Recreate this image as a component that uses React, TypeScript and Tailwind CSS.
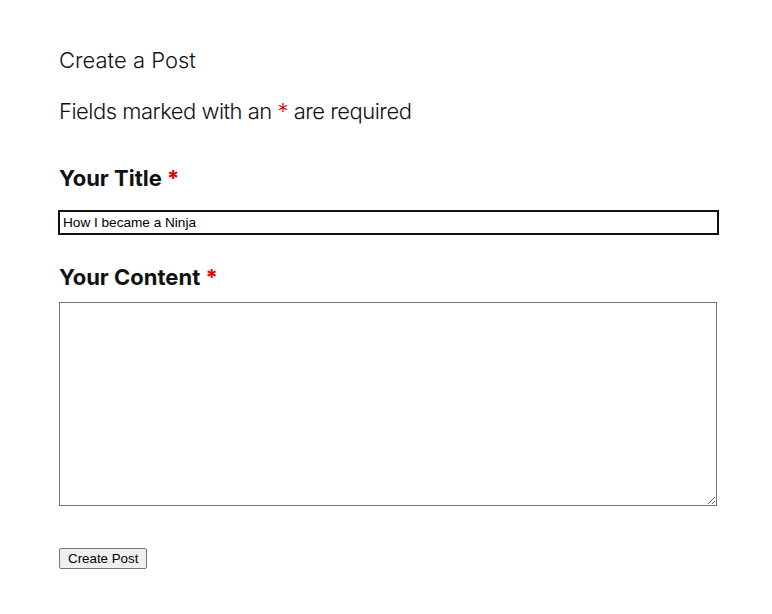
export default function App() {
  return (
    <div className="min-h-screen bg-white pl-[59px] pr-[55px] pt-[45px] text-[#111] font-['Inter',sans-serif]">
      <h1 className="text-[22px] font-light leading-[30px]">Create a Post</h1>
      <p className="mt-[21px] text-[22px] font-light leading-[30px] tracking-[-0.5px]">
        Fields marked with an <span className="text-[#e00000]">*</span> are required
      </p>
      <form className="mt-[37px]">
        <label className="block text-[22px] font-bold leading-[30px]">
          Your Title <span className="text-[#e00000]">*</span>
        </label>
        <input
          defaultValue="How I became a Ninja"
          className="mt-[17px] -ml-[1px] block h-[25px] w-[661px] border-2 border-[#101010] px-[3px] text-[13.6px] font-['Liberation_Sans',Arial,sans-serif] text-black outline-none"
        />
        <label className="mt-[27px] block text-[22px] font-bold leading-[30px]">
          Your Content <span className="text-[#e00000]">*</span>
        </label>
        <textarea className="mt-[10px] block h-[204px] w-[658px] border border-[#767676] font-['Liberation_Sans',Arial,sans-serif] text-[13.33px] outline-none" />
        <button
          type="button"
          className="mt-[42px] block h-[21px] rounded-[2px] border border-[#767676] bg-[#efefef] px-[8px] text-[13.33px] leading-none text-black font-['Liberation_Sans',Arial,sans-serif]"
        >
          Create Post
        </button>
      </form>
    </div>
  )
}
